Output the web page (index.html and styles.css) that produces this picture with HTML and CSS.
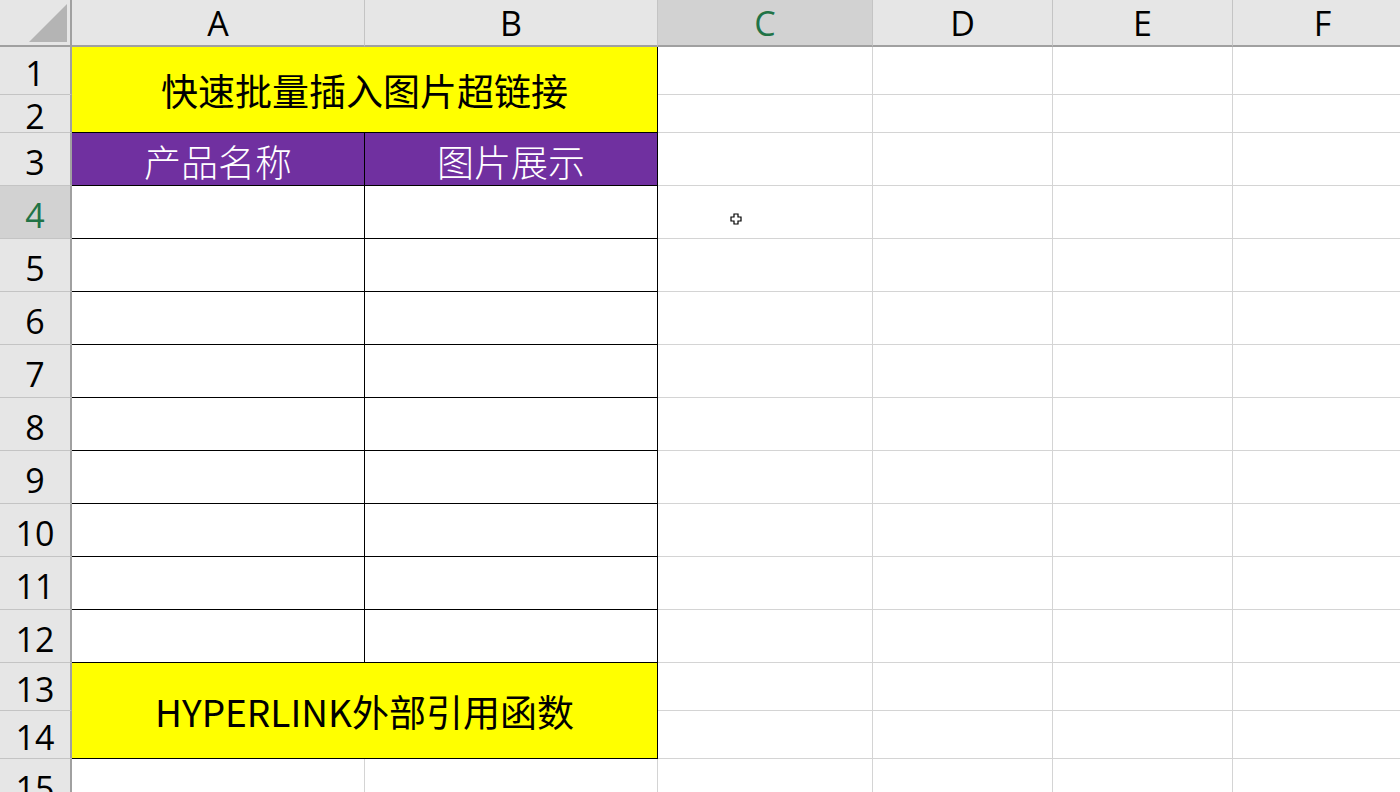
FILE: index.html
```html
<!DOCTYPE html>
<html lang="zh-CN">
<head>
  <meta charset="UTF-8" />
  <title>快速批量插入图片超链接</title>
  <link rel="stylesheet" href="styles.css">
</head>
<body>
  <div class="sheet">
    <div class="corner"><span class="corner-tri"></span></div>
    <div class="col-head">A</div>
    <div class="col-head">B</div>
    <div class="col-head sel">C</div>
    <div class="col-head">D</div>
    <div class="col-head">E</div>
    <div class="col-head">F</div>

    <!-- row 1-2 -->
    <div class="row-head">1</div>
    <div class="cell title span-2x2">快速批量插入图片超链接</div>
    <div class="cell"></div><div class="cell"></div><div class="cell"></div><div class="cell"></div>
    <div class="row-head">2</div>
    <div class="cell"></div><div class="cell"></div><div class="cell"></div><div class="cell"></div>

    <!-- row 3 -->
    <div class="row-head">3</div>
    <div class="cell boxed purple">产品名称</div>
    <div class="cell boxed purple">图片展示</div>
    <div class="cell"></div><div class="cell"></div><div class="cell"></div><div class="cell"></div>

    <!-- rows 4-12 -->
    <div class="row-head sel">4</div>
    <div class="cell boxed"></div><div class="cell boxed"></div>
    <div class="cell"></div><div class="cell"></div><div class="cell"></div><div class="cell"></div>
    <div class="row-head">5</div>
    <div class="cell boxed"></div><div class="cell boxed"></div>
    <div class="cell"></div><div class="cell"></div><div class="cell"></div><div class="cell"></div>
    <div class="row-head">6</div>
    <div class="cell boxed"></div><div class="cell boxed"></div>
    <div class="cell"></div><div class="cell"></div><div class="cell"></div><div class="cell"></div>
    <div class="row-head">7</div>
    <div class="cell boxed"></div><div class="cell boxed"></div>
    <div class="cell"></div><div class="cell"></div><div class="cell"></div><div class="cell"></div>
    <div class="row-head">8</div>
    <div class="cell boxed"></div><div class="cell boxed"></div>
    <div class="cell"></div><div class="cell"></div><div class="cell"></div><div class="cell"></div>
    <div class="row-head">9</div>
    <div class="cell boxed"></div><div class="cell boxed"></div>
    <div class="cell"></div><div class="cell"></div><div class="cell"></div><div class="cell"></div>
    <div class="row-head">10</div>
    <div class="cell boxed"></div><div class="cell boxed"></div>
    <div class="cell"></div><div class="cell"></div><div class="cell"></div><div class="cell"></div>
    <div class="row-head">11</div>
    <div class="cell boxed"></div><div class="cell boxed"></div>
    <div class="cell"></div><div class="cell"></div><div class="cell"></div><div class="cell"></div>
    <div class="row-head">12</div>
    <div class="cell boxed"></div><div class="cell boxed"></div>
    <div class="cell"></div><div class="cell"></div><div class="cell"></div><div class="cell"></div>

    <!-- rows 13-14 -->
    <div class="row-head">13</div>
    <div class="cell title span-2x2">HYPERLINK外部引用函数</div>
    <div class="cell"></div><div class="cell"></div><div class="cell"></div><div class="cell"></div>
    <div class="row-head">14</div>
    <div class="cell"></div><div class="cell"></div><div class="cell"></div><div class="cell"></div>

    <!-- row 15 -->
    <div class="row-head">15</div>
    <div class="cell"></div><div class="cell"></div>
    <div class="cell"></div><div class="cell"></div><div class="cell"></div><div class="cell"></div>

    <!-- mouse pointer -->
    <svg class="pointer" width="12" height="12" viewBox="0 0 12 12">
      <path d="M4 1h4v3h3v4H8v3H4V8H1V4h3z" fill="#fff" stroke="#000" stroke-width="1.2"/>
    </svg>
  </div>
</body>
</html>
```

FILE: styles.css
```css
:root {
  --head-bg: #e6e6e6;
  --head-sel: #d2d2d2;
  --head-line: #c4c4c4;
  --head-edge: #a0a0a0;
  --grid: #d4d4d4;
  --yellow: #ffff00;
  --purple: #7030a0;
  --sel-text: #217346;
}
* { box-sizing: border-box; }
body {
  margin: 0;
  background: #fff;
  font-family: "Noto Sans", "Noto Sans CJK SC", sans-serif;
}
.sheet {
  position: relative;
  width: 1400px;
  height: 792px;
  overflow: hidden;
  display: grid;
  grid-template-columns: 72px 293px 293px 215px 180px 180px 180px;
  grid-template-rows: 47px 48px 38px 53px repeat(9, 53px) 48px 48px 53px;
}
.corner {
  background: var(--head-bg);
  border-right: 2px solid var(--head-edge);
  border-bottom: 2px solid var(--head-edge);
  position: relative;
}
.corner-tri {
  position: absolute;
  right: 3px;
  bottom: 3px;
  width: 38px;
  height: 38px;
  background: #b4b4b4;
  clip-path: polygon(100% 0, 100% 100%, 0 100%);
}
.col-head, .row-head {
  background: var(--head-bg);
  color: #000;
  font-family: "Open Sans", "Noto Sans", sans-serif;
  font-stretch: 88%;
  font-size: 34px;
  display: flex;
  align-items: center;
  justify-content: center;
  line-height: 1;
}
.col-head {
  border-right: 1px solid var(--head-line);
  border-bottom: 2px solid var(--head-edge);
}
.row-head {
  border-right: 2px solid var(--head-edge);
  border-bottom: 1px solid var(--head-line);
  padding-top: 5px;
}
.col-head.sel, .row-head.sel {
  background: var(--head-sel);
  color: var(--sel-text);
}
.cell {
  border-right: 1px solid var(--grid);
  border-bottom: 1px solid var(--grid);
  display: flex;
  align-items: center;
  justify-content: center;
}
.cell.boxed, .cell.title {
  border-right-color: #000;
  border-bottom-color: #000;
}
.span-2x2 {
  grid-column: span 2;
  grid-row: span 2;
}
.title {
  background: var(--yellow);
  color: #000;
  font-family: "Noto Sans CJK SC", sans-serif;
  font-size: 37px;
}
.purple {
  background: var(--purple);
  color: #fff;
  font-family: "Noto Sans CJK SC", serif;
  font-weight: 300;
  font-size: 37px;
  padding-top: 3px;
}
.pointer {
  position: absolute;
  left: 730px;
  top: 213px;
}
```
